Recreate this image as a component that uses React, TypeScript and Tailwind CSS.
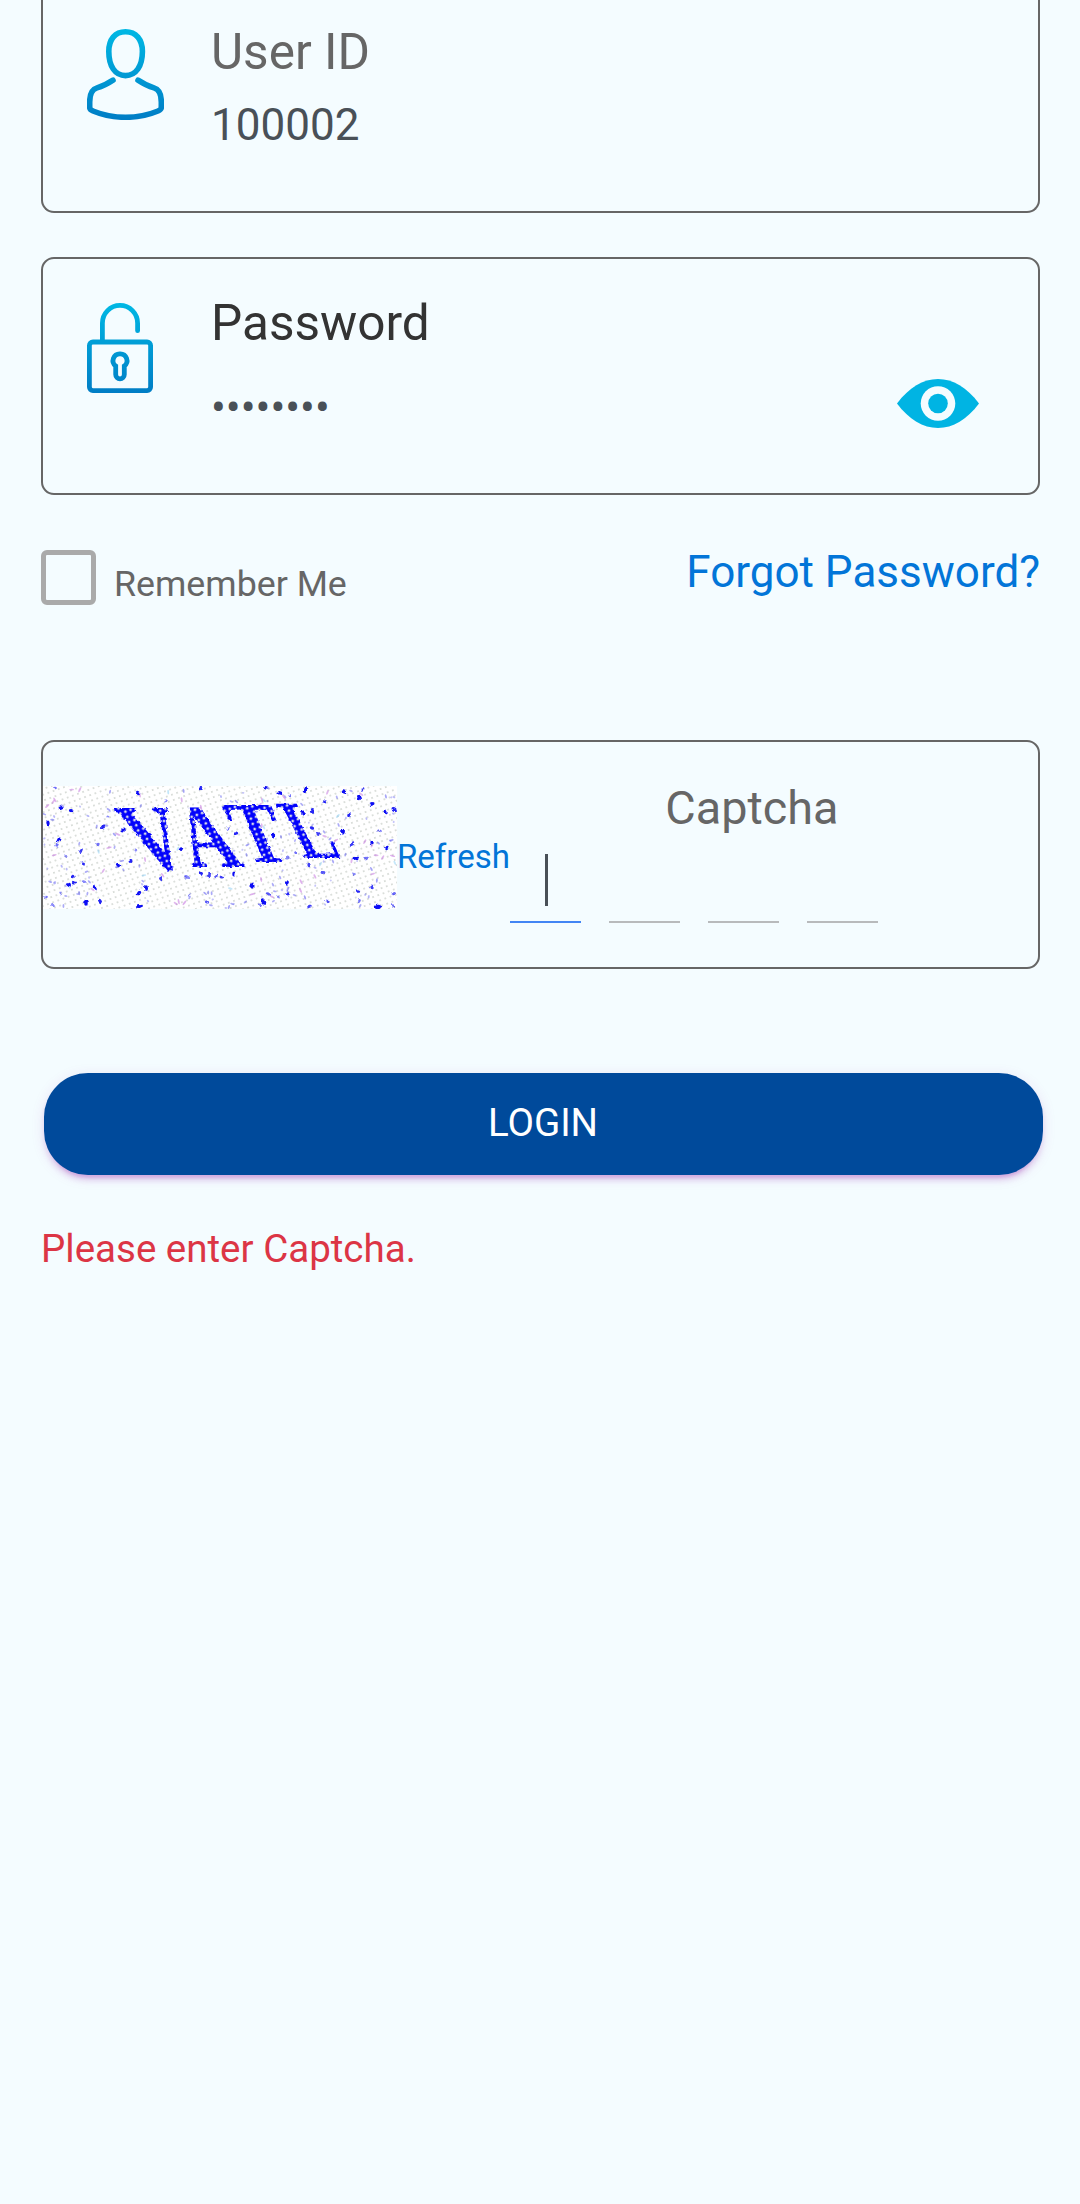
import React from "react";

function UserIcon() {
  return (
    <svg className="mt-[29px] h-[91px] w-[77px] shrink-0" viewBox="0 0 77 91" fill="none">
      <defs>
        <linearGradient id="userTone" x1="0" y1="0" x2="0" y2="91" gradientUnits="userSpaceOnUse">
          <stop offset="0" stopColor="#00b8e4" />
          <stop offset="1" stopColor="#007dc5" />
        </linearGradient>
      </defs>
      <g stroke="url(#userTone)" strokeWidth="5.6" strokeLinecap="round" strokeLinejoin="round">
        <path d="M38.5 2.8C28 2.8 21.8 10.5 21.8 22.5C21.8 37 28 46.6 38.5 46.6C49 46.6 55.4 37 55.4 22.5C55.4 10.5 49 2.8 38.5 2.8Z" />
        <path d="M26 51.2C20 55.2 15 57.5 10 58.9C4.5 60.5 2.7 66 2.7 73V78.5C2.7 80.5 4 81.2 6 82C26 90.4 51 90.4 71 82C73 81.2 74.3 80.5 74.3 78.5V73C74.3 66 72.5 60.5 67 58.9C62 57.5 57 55.2 51 51.2" />
      </g>
    </svg>
  );
}

function LockIcon() {
  return (
    <svg className="mt-[44px] h-[90px] w-[66px] shrink-0" viewBox="0 0 66 90" fill="none">
      <defs>
        <linearGradient id="lockTone" x1="0" y1="0" x2="0" y2="90" gradientUnits="userSpaceOnUse">
          <stop offset="0" stopColor="#00b8e4" />
          <stop offset="1" stopColor="#007dc5" />
        </linearGradient>
      </defs>
      <g stroke="url(#lockTone)" strokeWidth="4.8" strokeLinecap="round">
        <path d="M15.4 38V20.2A17.6 17.8 0 0 1 50.6 20.2V27.7" />
        <rect x="2.4" y="39" width="61.2" height="48.6" rx="3.5" />
        <path d="M33 50.8A6.8 6.8 0 0 0 28.7 63V71.5A4.3 4.3 0 0 0 37.3 71.5V63A6.8 6.8 0 0 0 33 50.8Z" />
      </g>
    </svg>
  );
}

function EyeIcon() {
  return (
    <svg className="h-[49px] w-[82px]" viewBox="0 0 82 49">
      <path fill="#00b4e3" d="M0 24.5C12 8.5 26 0 41 0S70 8.5 82 24.5C70 40.5 56 49 41 49S12 40.5 0 24.5Z" />
      <circle cx="41" cy="24.5" r="17.3" fill="#f4fcff" />
      <circle cx="41" cy="24.5" r="9.8" fill="#00b4e3" />
    </svg>
  );
}

// Ink specks: x, y, radius, opacity
const specks: number[][] = [
  [12, 2, 1.6, 0.6], [95, 7, 2.2, 1], [158, 2, 2, 0.9], [222, 2, 2, 1], [237, 7, 2.3, 1], [247, 10, 1.5, 0.6],
  [262, 4, 2.6, 1], [282, 15, 1.8, 0.9], [301, 6, 2, 1], [316, 12, 2.2, 1], [320, 3, 1.6, 0.8], [329, 18, 2.2, 1],
  [351, 23, 2.3, 0.9], [343, 26, 2, 1], [306, 29, 2, 0.9], [18, 22, 2.3, 1], [28, 25, 2, 1], [5, 37, 2.1, 1],
  [16, 54, 2.4, 1], [60, 41, 1.8, 0.9], [65, 31, 1.5, 0.5], [80, 44, 2.2, 1], [38, 65, 1.9, 0.8], [40, 78, 1.8, 0.9],
  [75, 79, 2.1, 1], [87, 75, 1.8, 0.9], [138, 63, 2.1, 1], [193, 47, 2, 0.9], [230, 49, 2.2, 1], [260, 27, 2.2, 1],
  [269, 25, 2, 0.9], [269, 42, 2, 0.9], [275, 48, 1.8, 0.8], [300, 46, 2.3, 1], [309, 58, 2, 0.8], [336, 45, 1.6, 0.6],
  [328, 57, 2, 1], [344, 62, 2, 1], [323, 72, 1.6, 0.6], [313, 73, 2.4, 1], [30, 91, 2, 0.9], [26, 99, 2, 1],
  [31, 97, 1.9, 0.9], [52, 102, 2.1, 1], [103, 102, 2.5, 1], [96, 107, 2.2, 1], [96, 120, 2.5, 1], [57, 115, 2, 0.9],
  [43, 117, 2.3, 1], [147, 109, 1.6, 0.5], [164, 116, 1.9, 0.7], [209, 100, 2.6, 1], [244, 97, 2.3, 1], [245, 108, 1.9, 0.9],
  [226, 108, 2, 0.7], [221, 116, 2.5, 1], [266, 121, 2, 0.8], [280, 87, 2.2, 0.7], [315, 105, 2, 0.9], [329, 101, 2.1, 0.8],
  [351, 107, 1.9, 0.6], [335, 121, 2.8, 1], [350, 120, 2, 0.6], [284, 115, 2, 0.7], [316, 115, 1.8, 0.6], [3, 111, 1.6, 0.6],
  [10, 119, 2, 0.5], [191, 88, 2.2, 1], [158, 88, 2, 0.9], [179, 91, 2, 0.8], [118, 93, 2, 0.8], [55, 58, 2, 0.6],
  [14, 59, 1.6, 0.6], [41, 96, 2, 0.5], [110, 67, 1.6, 0.5], [102, 58, 1.8, 0.6], [122, 15, 1.6, 0.5], [144, 91, 2, 0.5],
  [166, 89, 2.2, 0.8], [173, 90, 2, 0.7], [235, 111, 1.6, 0.5], [217, 119, 1.8, 0.6], [311, 88, 2, 0.5], [185, 43, 1.5, 0.6],
  [245, 72, 1.7, 0.5], [253, 67, 1.7, 0.6], [265, 79, 2, 0.8], [92, 64, 1.5, 0.5], [23, 70, 1.6, 0.4], [18, 107, 1.6, 0.5],
];

function makeFaint(count: number) {
  let seed = 4271;
  const next = () => {
    seed = (seed * 16807) % 2147483647;
    return seed / 2147483647;
  };
  return Array.from({ length: count }, () => ({ x: next() * 352, y: next() * 122, t: next(), a: next() * 180 }));
}
const faint = makeFaint(190);

const letters = [
  { ch: "V", size: 93, m: "matrix(0.85 0 0.47 1 97 83)" },
  { ch: "A", size: 90, m: "matrix(0.83 0 0.42 1 149 81)" },
  { ch: "T", size: 87, m: "matrix(0.86 0 0.42 1 202 76)" },
  { ch: "L", size: 83, m: "matrix(0.74 0 0.52 1 260 72)" },
];

function CaptchaImage() {
  return (
    <svg className="h-[123px] w-[354px] shrink-0 bg-white" viewBox="0 0 354 123">
      <defs>
        <pattern id="mesh" width="5.5" height="5.5" patternUnits="userSpaceOnUse" patternTransform="rotate(-20)">
          <circle cx="2.7" cy="2.7" r="0.95" fill="#d0d5d0" />
        </pattern>
        <pattern id="ink" width="5.5" height="5.5" patternUnits="userSpaceOnUse" patternTransform="rotate(-20)">
          <rect width="5.5" height="5.5" fill="#0202fc" />
          <circle cx="2.7" cy="2.7" r="1.4" fill="#d9dce6" />
        </pattern>
        <filter id="rough">
          <feTurbulence type="fractalNoise" baseFrequency="0.22" numOctaves="2" seed="8" result="n" />
          <feDisplacementMap in="SourceGraphic" in2="n" scale="4" xChannelSelector="R" yChannelSelector="G" />
        </filter>
        <mask id="glyphs">
          <g fill="#fff" fontFamily="Liberation Serif, serif" fontWeight="700" filter="url(#rough)">
            {letters.map((l) => (
              <text key={l.ch} fontSize={l.size} transform={l.m}>
                {l.ch}
              </text>
            ))}
          </g>
        </mask>
      </defs>
      <rect width="354" height="123" fill="url(#mesh)" />
      {faint.map((f, i) => (
        <ellipse
          key={i}
          rx={1 + f.t * 1.8}
          ry="0.95"
          fill={f.t > 0.8 ? "#c77be0" : f.t > 0.72 ? "#8fd0f5" : "#4a48ee"}
          opacity={0.3 + f.t * 0.3}
          transform={`translate(${f.x} ${f.y}) rotate(${f.a})`}
        />
      ))}
      <g filter="url(#rough)">
        {specks.map(([x, y, r, o], i) => (
          <ellipse key={i} cx={x} cy={y} rx={r * 1.15} ry={r * 0.8} fill="#1010f5" opacity={o} transform={`rotate(${(i * 47) % 180} ${x} ${y})`} />
        ))}
      </g>
      <rect width="354" height="123" fill="url(#ink)" mask="url(#glyphs)" />
    </svg>
  );
}

export default function App() {
  return (
    <main className="flex h-[2204px] w-[1080px] flex-col overflow-hidden bg-[#f4fcff] pr-[40px] pl-[41px] font-['Roboto',sans-serif] text-[#666]">
      <section className="flex h-[213px] shrink-0 rounded-b-[13px] border-2 border-t-0 border-[#666] pl-[44px]">
        <UserIcon />
        <div className="ml-[47px] flex flex-col gap-[13px] pt-[22px]">
          <label className="text-[49.5px] leading-[60px]">User ID</label>
          <span className="text-[44px] leading-[60px] text-[#495057]">100002</span>
        </div>
      </section>

      <section className="mt-[44px] flex h-[238px] shrink-0 rounded-[13px] border-2 border-[#666] pr-[59px] pl-[44px]">
        <LockIcon />
        <div className="ml-[58px] flex flex-1 flex-col gap-[25px] pt-[34px]">
          <label className="text-[49.5px] leading-[60px] text-[#333]">Password</label>
          <span className="text-[44px] leading-[60px] text-[#495057]">••••••••</span>
        </div>
        <button className="mt-[120px] self-start" aria-label="Show password">
          <EyeIcon />
        </button>
      </section>

      <div className="mt-[51px] flex h-[60px] shrink-0 items-start">
        <span className="mt-[4px] size-[55px] rounded-[6px] border-[5px] border-[#aaa]" />
        <span className="mt-[18px] ml-[18px] text-[35.75px] leading-[40px]">Remember Me</span>
        <a className="ml-auto text-[44px] leading-[52px] text-[#0275d8]">Forgot Password?</a>
      </div>

      <section className="mt-[134px] flex h-[229px] shrink-0 rounded-[13px] border-2 border-[#666] pt-[44px]">
        <CaptchaImage />
        <a className="mt-[51px] text-[33px] leading-[40px] text-[#0275d8]">Refresh</a>
        <div className="flex w-[484px] flex-col">
          <label className="w-full text-center text-[46.75px] leading-[44px]">Captcha</label>
          <div className="mt-[24px] flex gap-[28px]">
            <span className="flex h-[69px] w-[71px] justify-center border-b-2 border-[#4285f4] pl-[2px]">
              <span className="h-[52px] w-[3px] bg-[#495057]" />
            </span>
            <span className="h-[69px] w-[71px] border-b-2 border-[#b8babc]" />
            <span className="h-[69px] w-[71px] border-b-2 border-[#b8babc]" />
            <span className="h-[69px] w-[71px] border-b-2 border-[#b8babc]" />
          </div>
        </div>
      </section>

      <button className="mt-[104px] -mr-[3px] ml-[3px] h-[102px] shrink-0 rounded-[44px] bg-[#004a9b] pr-px text-[38.5px] leading-[100px] text-white shadow-[0_8.25px_2.75px_-5.5px_rgba(156,39,176,0.2),0_5.5px_5.5px_0_rgba(156,39,176,0.14),0_2.75px_13.75px_0_rgba(156,39,176,0.12)]">
        <span className="block h-[102px]">LOGIN</span>
      </button>
      <p className="mt-[50px] text-[38.5px] leading-[48px] text-[#dc3545]">Please enter Captcha.</p>
    </main>
  );
}
